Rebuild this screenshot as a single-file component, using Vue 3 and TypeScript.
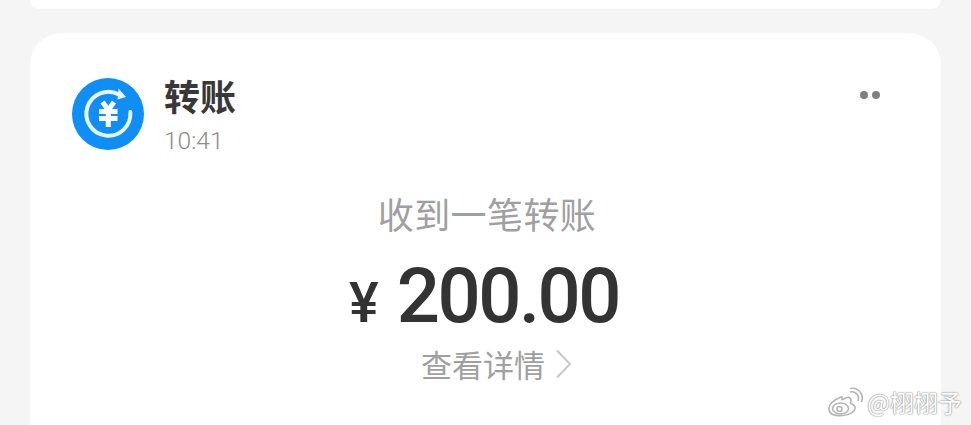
<script setup lang="ts">
const title = '转账'
const time = '10:41'
</script>

<template>
  <div class="page">
    <div class="stub"></div>
    <section class="card">
      <header class="head">
        <svg class="logo" width="72" height="72" viewBox="0 0 72 72">
          <circle cx="36" cy="36" r="36" fill="#0f8ef5" />
          <path d="M47 16.500 A 22 22 0 1 0 58.300 34" fill="none" stroke="#e8f4fe" stroke-width="4" stroke-linecap="round" />
          <path d="M46.500 10.500 L54 19 L45.500 21.500 Z" fill="#e8f4fe" />
          <path d="M30.500 24 L36.300 32 L42 24 M27 33.500 H45.500 M27 40.500 H45.500 M36.300 32 V49" fill="none" stroke="#fff" stroke-width="5" />
        </svg>
        <div class="meta">
          <div class="title">{{ title }}</div>
          <div class="time">{{ time }}</div>
        </div>
        <div class="dots"><i></i><i></i></div>
      </header>
      <div class="body">
        <div class="sub">收到一笔转账</div>
        <div class="amount"><span class="yen">¥</span><span class="num">200.00</span></div>
        <div class="detail">
          <span>查看详情</span>
          <svg width="17" height="30" viewBox="0 0 17 30"><path d="M2 1.500 L15 15 L2 28.500" fill="none" stroke="#c9c9c9" stroke-width="2" /></svg>
        </div>
      </div>
    </section>
    <div class="mark">
      <svg width="36" height="30" viewBox="0 0 36 30">
        <g fill="none" stroke="#b5b5b5" stroke-width="1.600">
          <path d="M14 10 C6 13 1 18 2 23 C3 28 10 29 16 28.500 C23 28 29 24 28 20 C27 17.500 24 17 23.500 16 C25 12 23 10 20 10.500 C18 11 16 12.500 15 12.500 C15.500 10 15 9.500 14 10 Z" fill="#fff" />
          <ellipse cx="13.500" cy="21.500" rx="8" ry="5.500" />
          <circle cx="12.500" cy="22" r="2.500" />
          <path d="M23 5 C28 4 33 8 31 14" />
          <path d="M23 1.500 C31 0 37.500 7 34.500 15" />
        </g>
      </svg>
      <span>@栩栩予</span>
    </div>
  </div>
</template>

<style>
html, body { margin: 0; background: #f5f5f5; }
</style>

<style scoped>
.page {
  position: relative;
  width: 971px;
  height: 425px;
  overflow: hidden;
  background: #f5f5f5;
  padding: 0 30px 0 30px;
  box-sizing: border-box;
  font-family: "Noto Sans CJK SC", "Noto Sans", sans-serif;
}
.stub {
  height: 9px;
  background: #fff;
  border-radius: 0 0 28px 28px;
}
.card {
  margin-top: 24px;
  height: 440px;
  background: #fff;
  border-radius: 32px;
  box-sizing: border-box;
  padding: 45px 42px 0;
}
.head {
  display: flex;
  align-items: flex-start;
}
.logo { flex: none; }
.meta {
  margin-left: 20px;
  flex: 1;
  margin-top: -6px;
}
.title {
  font-size: 36px;
  font-weight: 700;
  line-height: 46px;
  color: #383838;
}
.time {
  font-family: Roboto, sans-serif;
  font-weight: 300;
  font-size: 24.500px;
  line-height: 30px;
  margin-top: 8px;
  color: #8c8c8c;
}
.dots {
  display: flex;
  gap: 4px;
  margin: 13px 19px 0 0;
}
.dots i {
  width: 8px;
  height: 8px;
  border-radius: 50%;
  background: #808080;
}
.body {
  display: flex;
  flex-direction: column;
  align-items: center;
  margin-top: 33px;
  padding-right: 3px;
}
.sub {
  font-size: 36px;
  font-weight: 400;
  letter-spacing: 0.400px;
  line-height: 48px;
  color: #a0a0a0;
  margin-left: 6px;
}
.amount {
  display: flex;
  align-items: baseline;
  margin-top: 29px;
  color: #333;
}
.yen {
  font-family: Roboto, sans-serif;
  font-weight: 500;
  font-size: 56px;
  line-height: 40px;
  margin-right: 18px;
}
.num {
  font-family: Roboto, sans-serif;
  font-size: 76px;
  font-weight: 500;
  letter-spacing: -2.500px;
  line-height: 60px;
}
.detail {
  display: flex;
  align-items: center;
  gap: 10px;
  font-size: 31px;
  font-weight: 400;
  line-height: 42px;
  color: #a0a0a0;
  margin-left: 25px;
  margin-top: 17px;
}
.mark {
  position: absolute;
  right: 9px;
  top: 387px;
  display: flex;
  align-items: center;
  gap: 4px;
  font-size: 24px;
  line-height: 30px;
  color: #fff;
  text-shadow: 0 0 1.500px #8a8a8a, 0 0 1.500px #8a8a8a;
}
</style>
